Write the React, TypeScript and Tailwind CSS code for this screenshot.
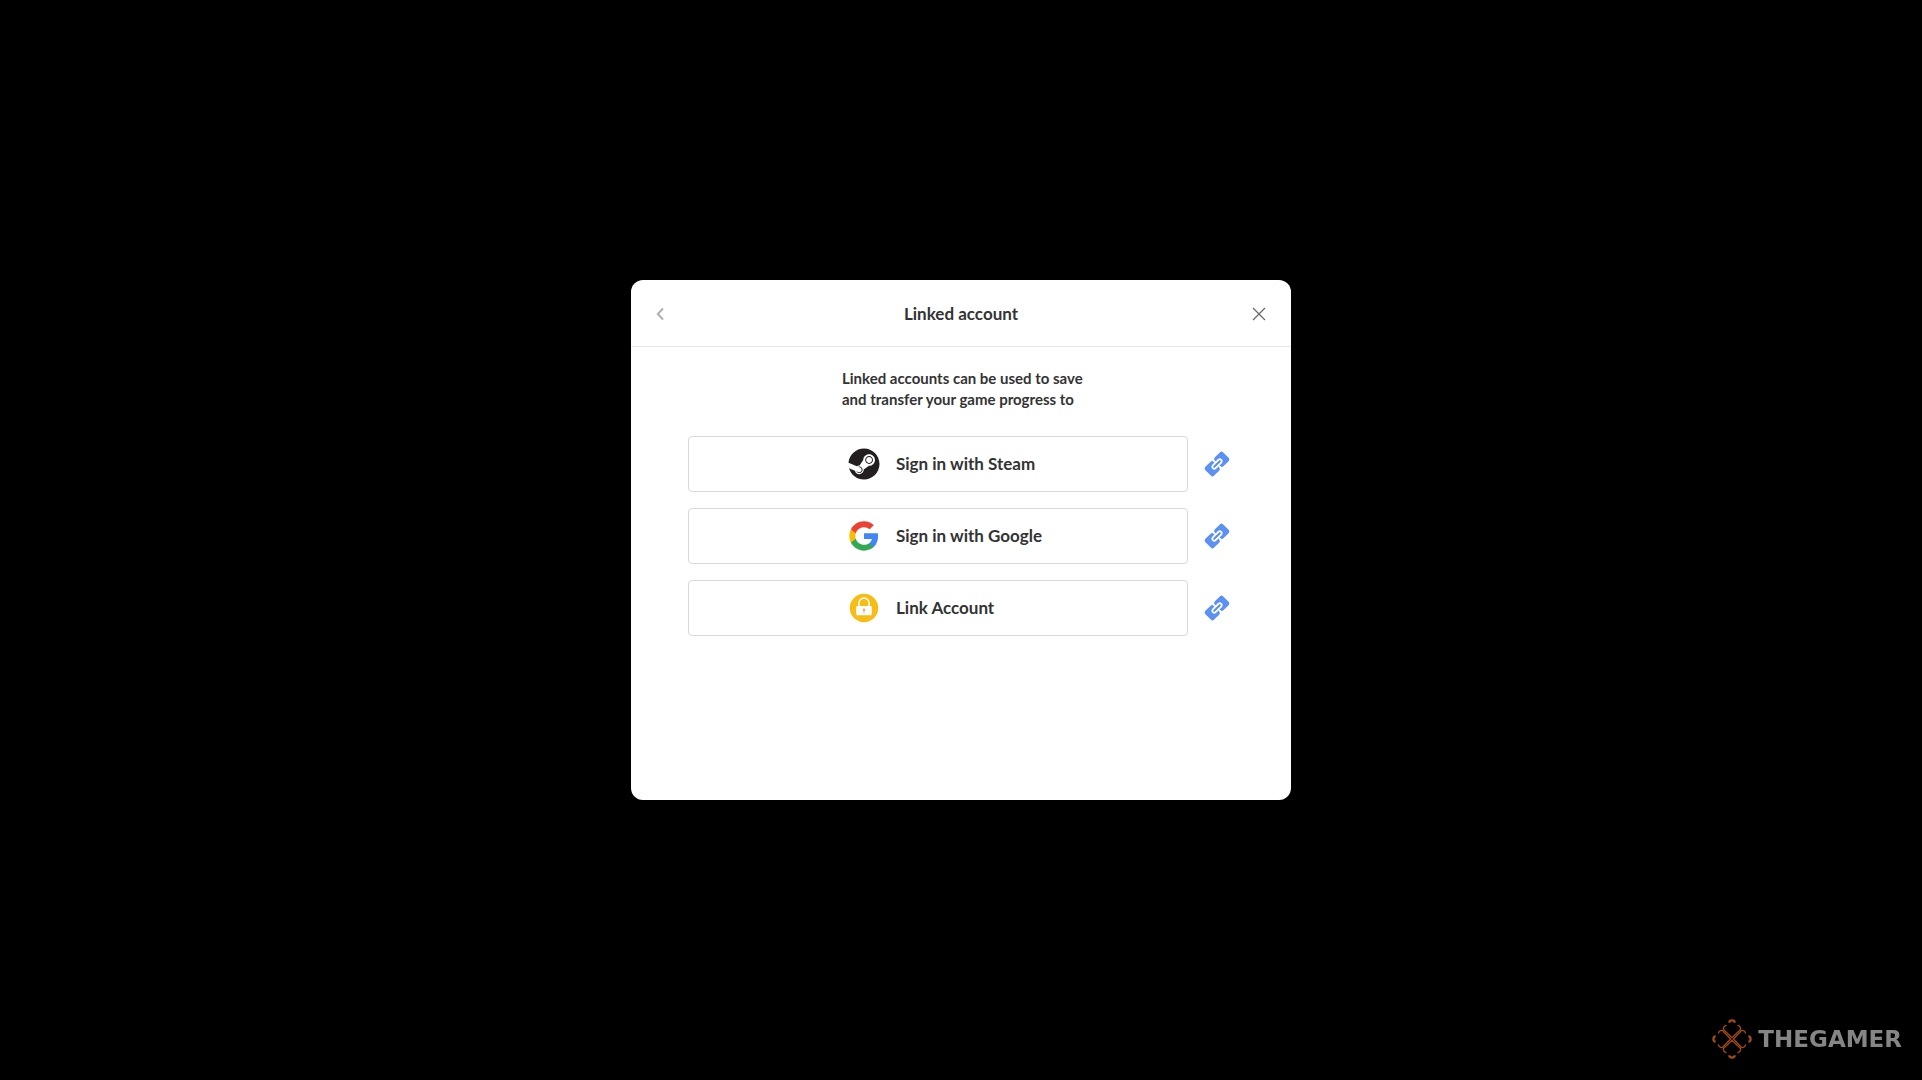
import { ReactNode } from 'react'
import { FaSteam } from 'react-icons/fa'

type Provider = {
  id: string
  label: string
  icon: ReactNode
}

function GoogleIcon() {
  return (
    <svg viewBox="0 0 24 24" className="size-8" aria-hidden="true">
      <path fill="#4285f4" d="M22.56 12.25c0-.78-.07-1.53-.2-2.25H12v4.26h5.92c-.26 1.37-1.04 2.53-2.21 3.31v2.77h3.57c2.08-1.92 3.28-4.74 3.28-8.09z" />
      <path fill="#34a853" d="M12 23c2.97 0 5.46-.98 7.28-2.66l-3.57-2.77c-.98.66-2.23 1.06-3.71 1.06-2.86 0-5.29-1.93-6.16-4.53H2.18v2.84C3.99 20.53 7.7 23 12 23z" />
      <path fill="#fbbc05" d="M5.84 14.09c-.22-.66-.35-1.36-.35-2.09s.13-1.43.35-2.09V7.07H2.18C1.43 8.55 1 10.22 1 12s.43 3.45 1.18 4.93l3.66-2.84z" />
      <path fill="#ea4335" d="M12 5.38c1.62 0 3.06.56 4.21 1.64l3.15-3.15C17.45 2.09 14.97 1 12 1 7.7 1 3.99 3.47 2.18 7.07l3.66 2.84c.87-2.6 3.3-4.53 6.16-4.53z" />
    </svg>
  )
}

function LockIcon() {
  return (
    <svg viewBox="0 0 32 32" className="size-8" aria-hidden="true">
      <circle cx="16" cy="16" r="14.2" fill="#f9bc15" />
      <path d="M11 15v-4a5 5 0 0 1 10 0v4" fill="none" stroke="#fff" strokeWidth="1.6" />
      <rect x="8.2" y="14" width="15.6" height="9.2" rx="1" fill="#fff" />
      <circle cx="16" cy="17.8" r="1.2" fill="#f5a94c" />
      <path d="M15.5 18h1v3h-1z" fill="#f5a94c" />
    </svg>
  )
}

function LinkIcon() {
  return (
    <svg viewBox="0 0 28 28" className="size-7" aria-hidden="true">
      <g transform="rotate(-45 14 14)">
        <rect x="1.4" y="7.8" width="11.8" height="12.4" rx="2.4" fill="#5b91f2" />
        <rect x="14.8" y="7.8" width="11.8" height="12.4" rx="2.4" fill="#5b91f2" />
        <rect x="7.4" y="11.2" width="13.2" height="5.6" rx="2.8" fill="#fff" />
        <rect x="9" y="13" width="10" height="2" rx="1" fill="#5b91f2" />
      </g>
    </svg>
  )
}

function GamerMark() {
  return (
    <svg viewBox="0 0 120 120" className="size-10" fill="none" stroke="#a34a12" aria-hidden="true">
      {[0, 90, 180, 270].map((angle) => (
        <g key={angle} transform={`rotate(${angle} 60 60)`}>
          <path d="M44 19c-7 1-12 7-9 13l25 24 25-24c3-6-2-12-9-13" strokeWidth="4" />
          <path d="M52 11c0-9 16-9 16 0" strokeWidth="7" />
        </g>
      ))}
    </svg>
  )
}

const providers: Provider[] = [
  { id: 'steam', label: 'Sign in with Steam', icon: <FaSteam className="size-8 text-[#231f20]" /> },
  { id: 'google', label: 'Sign in with Google', icon: <GoogleIcon /> },
  { id: 'account', label: 'Link Account', icon: <LockIcon /> },
]

export default function App() {
  return (
    <div className="flex min-h-screen items-center justify-center bg-black font-['Lato','Noto_Sans',sans-serif] text-[#333]">
      <main className="min-h-[520px] w-full max-w-[660px] rounded-xl bg-white">
        <header className="flex h-[67px] items-center justify-between border-b border-[#e6e6e6] px-4 pt-[2px]">
          <button type="button" aria-label="Back" className="flex size-8 items-center justify-center">
            <svg viewBox="0 0 16 16" className="size-4" fill="none" stroke="#b0b0b0" strokeWidth="2">
              <path d="M8 2.5 2.8 8 8 13.5" />
            </svg>
          </button>
          <h1 className="text-[17px] font-bold">Linked account</h1>
          <button type="button" aria-label="Close" className="flex size-8 items-center justify-center">
            <svg viewBox="0 0 16 16" className="size-4" fill="none" stroke="#666" strokeWidth="1.2">
              <path d="m2 2 12 12M14 2 2 14" />
            </svg>
          </button>
        </header>

        <p className="mx-auto mt-[21px] w-[238px] text-[15px] leading-[21px] font-bold whitespace-nowrap">
          Linked accounts can be used to save
          <br />
          and transfer your game progress to
        </p>

        <ul className="mt-[26px] flex flex-col gap-4 px-[57px]">
          {providers.map((provider) => (
            <li key={provider.id} className="flex items-center gap-[15px]">
              <button
                type="button"
                className="flex h-14 w-[500px] items-center gap-4 rounded border border-[#d9d9d9] pl-[159px] text-[17px] font-bold"
              >
                {provider.icon}
                {provider.label}
              </button>
              <button type="button" aria-label={`Link: ${provider.label}`}>
                <LinkIcon />
              </button>
            </li>
          ))}
        </ul>
      </main>

      <div className="fixed right-5 bottom-[21px] flex items-center gap-1.5">
        <GamerMark />
        <span className="font-['DejaVu_Sans',sans-serif] text-[23px] leading-10 font-bold text-[#858585]">
          THEGAMER
        </span>
      </div>
    </div>
  )
}
